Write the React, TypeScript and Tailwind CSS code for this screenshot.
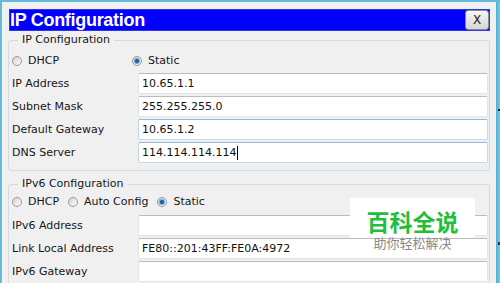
import clsx from "clsx";

function Radio({ checked, label }: { checked?: boolean; label: string }) {
  return (
    <div className="flex items-center gap-[6px]">
      <span className="flex h-[10px] w-[10px] items-center justify-center rounded-full border border-[#9a9a9a] bg-gradient-to-br from-[#d4d4d4] to-[#fbfbfb]">
        {checked && <span className="h-[4px] w-[4px] rounded-full bg-[#1d5fa0] ring-1 ring-[#6aa8dc]" />}
      </span>
      <span>{label}</span>
    </div>
  );
}

function Row({
  label,
  value,
  focus,
  cursor,
}: {
  label: string;
  value?: string;
  focus?: boolean;
  cursor?: boolean;
}) {
  return (
    <div className="flex h-[21px] items-center">
      <span className="w-[126px] shrink-0">{label}</span>
      <div
        className={clsx(
          "flex h-full flex-1 items-center rounded-[2px] border bg-white pl-[3px] text-[#111]",
          focus ? "border-[#c2d9ef] border-t-[#92b8de]" : "border-[#e3e4e8] border-t-[#bcbcbc]"
        )}
      >
        {value}
        {cursor && <span className="ml-px h-[14px] w-px bg-black" />}
      </div>
    </div>
  );
}

export default function App() {
  return (
    <div className="relative flex h-[283px] w-[500px] overflow-hidden bg-[#62bcd9] font-['DejaVu_Sans',sans-serif] text-[11px] leading-[14px] text-[#161616]">
      <div className="ml-[2px] mt-[2px] flex w-[494px] flex-col bg-[#f0f0f0] pl-[6px] pt-[7px]">
        {/* title bar */}
        <div className="ml-px flex h-[22px] w-[481px] items-center justify-between border border-[#3434e6] bg-[#0000ff]">
          <span className="font-['Liberation_Sans',sans-serif] text-[18px] font-bold leading-[22px] tracking-[-0.3px] text-white">
            IP Configuration
          </span>
          <button className="flex h-[20px] w-[24px] items-center justify-center rounded-[3px] border border-[#8a8a8a] bg-gradient-to-b from-[#f6f6f6] to-[#d6d6d6] text-[12px] text-[#222]">
            X
          </button>
        </div>

        <fieldset className="mt-[2px] w-[482px] rounded-[3px] border border-[#d3dbe0] pb-[7px] pl-[3px] pr-px">
          <legend className="ml-[6px] px-[4px] leading-[14px]">IP Configuration</legend>
          <div className="mt-[7px] flex h-[14px] items-center">
            <div className="w-[120px]">
              <Radio label="DHCP" />
            </div>
            <Radio checked label="Static" />
          </div>
          <div className="mt-[5px] flex flex-col gap-[2px]">
            <Row label="IP Address" value="10.65.1.1" />
            <Row label="Subnet Mask" value="255.255.255.0" />
            <Row label="Default Gateway" value="10.65.1.2" focus />
            <Row label="DNS Server" value="114.114.114.114" focus cursor />
          </div>
        </fieldset>

        <fieldset className="mt-[6px] w-[482px] rounded-[3px] border border-[#d3dbe0] pb-[7px] pl-[3px] pr-px">
          <legend className="ml-[6px] px-[4px] leading-[14px]">IPv6 Configuration</legend>
          <div className="mt-[4px] flex h-[14px] items-center gap-[9px]">
            <Radio label="DHCP" />
            <Radio label="Auto Config" />
            <Radio checked label="Static" />
          </div>
          <div className="mt-[6px] flex flex-col gap-[2px]">
            <Row label="IPv6 Address" />
            <Row label="Link Local Address" value="FE80::201:43FF:FE0A:4972" />
            <Row label="IPv6 Gateway" />
          </div>
        </fieldset>
      </div>

      {/* right edge of window behind */}
      <div className="relative mt-[2px] flex-1 bg-gradient-to-r from-[#4eaed2] to-[#7ccbe4]">
        <span className="absolute left-[2px] top-[107px] h-[2px] w-[2px] bg-[#222]" />
        <span className="absolute left-[2px] top-[240px] h-[3px] w-[2px] bg-[#333]" />
      </div>

      {/* watermark */}
      <div className="absolute left-[350px] top-[198px] h-[40px] w-[125px] bg-white" />
      <div className="absolute left-[350px] top-[209px] flex w-[125px] flex-col items-center gap-[3px] font-['Noto_Sans_CJK_SC',sans-serif]">
        <span className="text-[23px] font-bold leading-[24px] text-[#1fbf3c]">百科全说</span>
        <span className="text-[13px] leading-[14px] text-[#8a8a8a]">助你轻松解决</span>
      </div>
    </div>
  );
}
